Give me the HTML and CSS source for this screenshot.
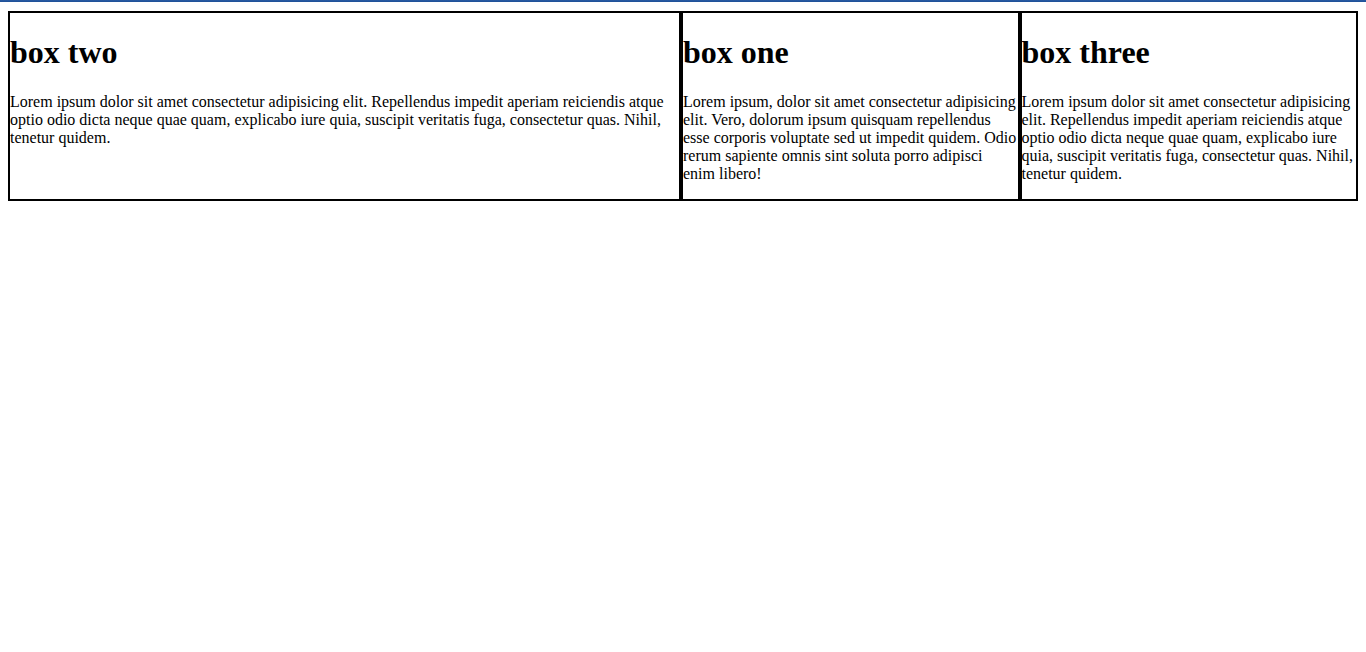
FILE: index.html
```html
<!DOCTYPE html>
<html>
<head>
<meta charset="utf-8">
<title>Boxes</title>
<link rel="stylesheet" href="styles.css">
</head>
<body>
<div class="topbar"></div>
<div class="container">
  <div class="box box-one">
    <h1>box one</h1>
    <p>Lorem ipsum, dolor sit amet consectetur adipisicing elit. Vero, dolorum ipsum quisquam repellendus esse corporis voluptate sed ut impedit quidem. Odio rerum sapiente omnis sint soluta porro adipisci enim libero!</p>
  </div>
  <div class="box box-two">
    <h1>box two</h1>
    <p>Lorem ipsum dolor sit amet consectetur adipisicing elit. Repellendus impedit aperiam reiciendis atque optio odio dicta neque quae quam, explicabo iure quia, suscipit veritatis fuga, consectetur quas. Nihil, tenetur quidem.</p>
  </div>
  <div class="box box-three">
    <h1>box three</h1>
    <p>Lorem ipsum dolor sit amet consectetur adipisicing elit. Repellendus impedit aperiam reiciendis atque optio odio dicta neque quae quam, explicabo iure quia, suscipit veritatis fuga, consectetur quas. Nihil, tenetur quidem.</p>
  </div>
</div>
</body>
</html>
```

FILE: styles.css
```css
html, body {
  background: #fff;
}
body {
  margin: 11px 8px 8px;
  font-family: "Liberation Serif", "Times New Roman", serif;
  color: #000;
}
.topbar {
  position: absolute;
  top: 0;
  left: 0;
  right: 0;
  height: 2px;
  background: linear-gradient(#2a5ca4, #1d4f96);
}
.container {
  display: flex;
  border: 2px solid #000;
}
.box {
  min-width: 0;
  flex: 1 1 0;
}
.box-two {
  order: 1;
  flex: 2 1 0;
  border-right: 2px solid #000;
}
.box-one {
  order: 2;
  border-left: 2px solid #000;
  border-right: 2px solid #000;
}
.box-three {
  order: 3;
  border-left: 2px solid #000;
}
h1 {
  font-size: 32px;
  margin: 21.44px 0;
}
p {
  font-size: 16px;
  margin: 16px 0;
}
```
